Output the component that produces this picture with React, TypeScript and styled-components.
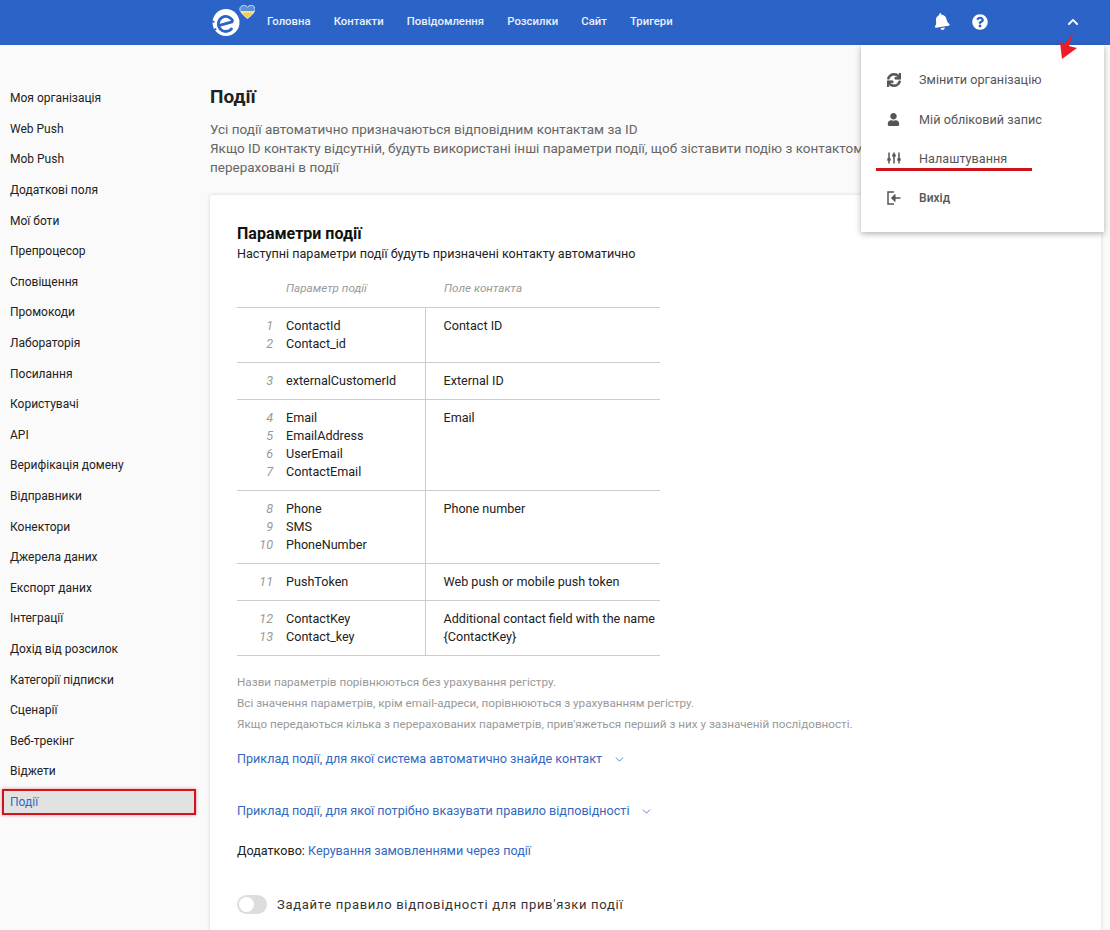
import React from 'react';
import styled, { createGlobalStyle } from 'styled-components';
import { FaBell, FaQuestionCircle, FaSync, FaUser, FaChevronUp } from 'react-icons/fa';
import { ChevronDown } from 'lucide-react';

const navItems = ['Головна', 'Контакти', 'Повідомлення', 'Розсилки', 'Сайт', 'Тригери'];

const sideItems = [
  'Моя організація', 'Web Push', 'Mob Push', 'Додаткові поля', 'Мої боти', 'Препроцесор', 'Сповіщення',
  'Промокоди', 'Лабораторія', 'Посилання', 'Користувачі', 'API', 'Верифікація домену', 'Відправники',
  'Конектори', 'Джерела даних', 'Експорт даних', 'Інтеграції', 'Дохід від розсилок', 'Категорії підписки',
  'Сценарії', 'Веб-трекінг', 'Віджети',
];

const rows = [
  { params: ['ContactId', 'Contact_id'], field: ['Contact ID'], start: 1 },
  { params: ['externalCustomerId'], field: ['External ID'], start: 3 },
  { params: ['Email', 'EmailAddress', 'UserEmail', 'ContactEmail'], field: ['Email'], start: 4 },
  { params: ['Phone', 'SMS', 'PhoneNumber'], field: ['Phone number'], start: 8 },
  { params: ['PushToken'], field: ['Web push or mobile push token'], start: 11 },
  { params: ['ContactKey', 'Contact_key'], field: ['Additional contact field with the name', '{ContactKey}'], start: 12 },
];

const GlobalStyle = createGlobalStyle`
  html, body {
    margin: 0;
    height: 930px;
    overflow: hidden;
    background: #fafafa;
    font-family: Roboto, "Liberation Sans", sans-serif;
    font-size: 12.6px;
    color: #222;
  }
  * { box-sizing: border-box; }
`;

const Header = styled.header`
  height: 45px;
  background: #2b63c6;
  display: flex;
  align-items: center;
  padding-left: 212px;
  color: #fff;
`;

const Nav = styled.nav`
  display: flex;
  gap: 23.2px;
  margin: 0 0 3px 12px;
  font-size: 11.3px;
  font-weight: 500;
  color: #eaf1fb;
`;

const HeaderIcons = styled.div`
  margin: 0 0 2px auto;
  display: flex;
  align-items: center;
  padding-right: 31px;
`;

const HeaderIcon = styled.span<{ $gap: number }>`
  display: flex;
  margin-left: ${(p) => p.$gap}px;
`;

const Body = styled.div`
  display: flex;
`;

const Sidebar = styled.aside`
  width: 210px;
  flex: none;
  padding-top: 38px;
`;

const SideItem = styled.div<{ $active?: boolean }>`
  height: 30.6px;
  margin: 0 14px 0 2px;
  padding-left: 8px;
  display: flex;
  align-items: center;
  font-size: 12px;
  color: ${(p) => (p.$active ? '#3369c0' : '#222')};
  background: ${(p) => (p.$active ? '#e2e2e2' : 'transparent')};
  ${(p) => p.$active && 'outline: 2px solid #d0141c; outline-offset: -2px; height: 26px; margin-top: 2px; box-shadow: 0 0 3px rgba(208,20,28,.5);'}
`;

const Main = styled.main`
  flex: 1;
  padding: 41px 9px 0 0;
`;

const Title = styled.h1`
  margin: 0;
  font-size: 19px;
  line-height: 22px;
  font-weight: 700;
  color: #222;
`;

const Intro = styled.p`
  margin: 12px 0 0;
  font-size: 13.5px;
  line-height: 19px;
  color: #666;
`;

const Card = styled.section`
  margin-top: 18px;
  background: #fff;
  border-radius: 3px 3px 0 0;
  box-shadow: 0 0 4px rgba(0, 0, 0, 0.14);
  padding: 29px 27px;
  height: 800px;
`;

const CardTitle = styled.h2`
  margin: 0 0 1px;
  font-size: 16px;
  line-height: 20px;
  font-weight: 700;
  color: #111;
`;

const CardSub = styled.div`
  line-height: 18px;
  color: #222;
`;

const Table = styled.table`
  margin-top: 16px;
  width: 423px;
  border-collapse: collapse;
  line-height: 18px;
  table-layout: fixed;
`;

const HeadCell = styled.th<{ $indent: number }>`
  font-size: 11.7px;
  font-weight: 400;
  font-style: italic;
  color: #999;
  text-align: left;
  padding: 0 0 10px ${(p) => p.$indent}px;
  height: 28px;
  border-bottom: 1px solid #ccc;
`;

const Row = styled.tr`
  border-bottom: 1px solid #ccc;
`;

const Cell = styled.td<{ $divider?: boolean }>`
  padding: 9px 0 9px 18px;
  vertical-align: top;
  ${(p) => p.$divider && 'border-right: 1px solid #ccc; padding-left: 0;'}
`;

const ParamLine = styled.div`
  display: flex;
`;

const ParamNum = styled.i`
  width: 49px;
  padding-right: 13px;
  text-align: right;
  color: #999;
`;

const Notes = styled.div`
  margin-top: 16px;
  font-size: 11.7px;
  line-height: 21px;
  color: #999;
`;

const Spoiler = styled.a<{ $top: number }>`
  display: flex;
  align-items: center;
  gap: 11px;
  margin-top: ${(p) => p.$top}px;
  line-height: 18px;
  color: #3369c0;
`;

const Extra = styled.div`
  margin-top: 22px;
  line-height: 18px;
  color: #222;
`;

const ExtraLink = styled.a`
  color: #3369c0;
`;

const ToggleRow = styled.div`
  margin-top: 35px;
  display: flex;
  align-items: center;
  gap: 10px;
  font-size: 13px;
  letter-spacing: 0.7px;
  color: #333;
`;

const Toggle = styled.span`
  width: 30px;
  height: 19px;
  border-radius: 10px;
  background: #ddd;
  padding: 2px;
  display: flex;
`;

const Knob = styled.span`
  width: 15px;
  height: 15px;
  border-radius: 50%;
  background: #fff;
`;

const Menu = styled.div`
  position: absolute;
  top: 45px;
  left: 861px;
  width: 243px;
  height: 187px;
  background: #fff;
  box-shadow: 0 2px 6px rgba(0, 0, 0, 0.3);
  padding-top: 15px;
`;

const MenuItem = styled.div<{ $strong?: boolean }>`
  height: 39.4px;
  display: flex;
  align-items: center;
  padding-left: 26px;
  color: #555;
  letter-spacing: 0.05px;
  ${(p) => p.$strong && 'font-size: 12px; font-weight: 500;'}
`;

const MenuIcon = styled.span`
  width: 32px;
  flex: none;
  display: flex;
  color: #555;
  font-size: 13px;
`;

const MenuUnderline = styled.div`
  position: absolute;
  left: 15px;
  top: 123px;
  width: 156px;
  height: 3px;
  background: #d0141c;
`;

const ArrowMark = styled.svg`
  position: absolute;
  left: 1059px;
  top: 33px;
`;

const Logo = () => (
  <svg width="43" height="38" viewBox="0 0 43 38">
    <circle cx="14" cy="18.500" r="13.500" fill="#fff" />
    <g transform="rotate(-15 14 18.500)" fill="none" stroke="#2b63c6" strokeWidth="2.800">
      <path d="M7 19.500h14" />
      <path d="M21 19.500a7.500 7.500 0 1 0-2.500 6" />
      <path d="M-1 13l4 2M-1 23l4-1" strokeWidth="1.800" />
    </g>
    <path d="M29 2.500c2-1.800 5-1.200 6.500.6 1.500-1.800 4.500-2.400 6.500-.6 2 1.900 1 4.400 0 5.400H29c-1-1-2-3.500 0-5.400Z" fill="#5b8fd8" stroke="#fff" strokeWidth=".8" />
    <path d="M29 8h13c-1.500 2.500-4 4.500-6.500 6.500C33 12.500 30.500 10.500 29 8Z" fill="#f1cf45" stroke="#fff" strokeWidth=".8" />
  </svg>
);

const SlidersIcon = () => (
  <svg width="14" height="14" viewBox="0 0 14 14" fill="none" stroke="#555" strokeWidth="1.500">
    <path d="M2 1.500v11M7 1.500v11M12 1.500v11" />
    <path d="M.3 8.500h3.400M5.300 4.500h3.400M10.300 8.500h3.400" strokeWidth="2.400" />
  </svg>
);

const ExitIcon = () => (
  <svg width="14" height="14" viewBox="0 0 14 14" fill="none" stroke="#555" strokeWidth="1.500">
    <path d="M7 1H1v12h6" />
    <path d="M13.500 7H5" />
    <path d="M8 3.500 4.500 7 8 10.500Z" fill="#555" strokeWidth="1" />
  </svg>
);

const App = () => (
  <>
    <GlobalStyle />
    <Header>
      <Logo />
      <Nav>
        {navItems.map((item) => (
          <span key={item}>{item}</span>
        ))}
      </Nav>
      <HeaderIcons>
        <HeaderIcon $gap={0}><FaBell size={17} style={{ transform: 'rotate(-10deg)' }} /></HeaderIcon>
        <HeaderIcon $gap={22}><FaQuestionCircle size={16} /></HeaderIcon>
        <HeaderIcon $gap={79}><FaChevronUp size={12} /></HeaderIcon>
      </HeaderIcons>
    </Header>
    <Body>
      <Sidebar>
        {sideItems.map((item) => (
          <SideItem key={item}>{item}</SideItem>
        ))}
        <SideItem $active>Події</SideItem>
      </Sidebar>
      <Main>
        <Title>Події</Title>
        <Intro>
          Усі події автоматично призначаються відповідним контактам за ID
          <br />
          Якщо ID контакту відсутній, будуть використані інші параметри події, щоб зіставити подію з контактом. Параметри
          <br />
          перераховані в події
        </Intro>
        <Card>
          <CardTitle>Параметри події</CardTitle>
          <CardSub>Наступні параметри події будуть призначені контакту автоматично</CardSub>
          <Table>
            <colgroup>
              <col width="188" />
              <col width="235" />
            </colgroup>
            <thead>
              <tr>
                <HeadCell $indent={49}>Параметр події</HeadCell>
                <HeadCell $indent={19}>Поле контакта</HeadCell>
              </tr>
            </thead>
            <tbody>
              {rows.map((row) => (
                <Row key={row.start}>
                  <Cell $divider>
                    {row.params.map((param, i) => (
                      <ParamLine key={param}>
                        <ParamNum>{row.start + i}</ParamNum>
                        {param}
                      </ParamLine>
                    ))}
                  </Cell>
                  <Cell>
                    {row.field.map((line) => (
                      <div key={line}>{line}</div>
                    ))}
                  </Cell>
                </Row>
              ))}
            </tbody>
          </Table>
          <Notes>
            Назви параметрів порівнюються без урахування регістру.
            <br />
            Всі значення параметрів, крім email-адреси, порівнюються з урахуванням регістру.
            <br />
            Якщо передаються кілька з перерахованих параметрів, прив'яжеться перший з них у зазначеній послідовності.
          </Notes>
          <Spoiler $top={15}>
            Приклад події, для якої система автоматично знайде контакт
            <ChevronDown size={13} strokeWidth={1.5} />
          </Spoiler>
          <Spoiler $top={34}>
            Приклад події, для якої потрібно вказувати правило відповідності
            <ChevronDown size={13} strokeWidth={1.5} />
          </Spoiler>
          <Extra>
            Додатково: <ExtraLink>Керування замовленнями через події</ExtraLink>
          </Extra>
          <ToggleRow>
            <Toggle><Knob /></Toggle>
            Задайте правило відповідності для прив'язки події
          </ToggleRow>
        </Card>
      </Main>
    </Body>
    <Menu>
      <MenuItem><MenuIcon><FaSync size={14} stroke="currentColor" strokeWidth={25} /></MenuIcon>Змінити організацію</MenuItem>
      <MenuItem><MenuIcon><FaUser /></MenuIcon>Мій обліковий запис</MenuItem>
      <MenuItem><MenuIcon><SlidersIcon /></MenuIcon>Налаштування</MenuItem>
      <MenuItem $strong><MenuIcon><ExitIcon /></MenuIcon>Вихід</MenuItem>
      <MenuUnderline />
    </Menu>
    <ArrowMark width="18" height="28" viewBox="0 0 18 28">
      <path d="M14 0 10 13l8 2L3 26 1 9l4 3Z" fill="#ee1c25" />
    </ArrowMark>
  </>
);

export default App;
